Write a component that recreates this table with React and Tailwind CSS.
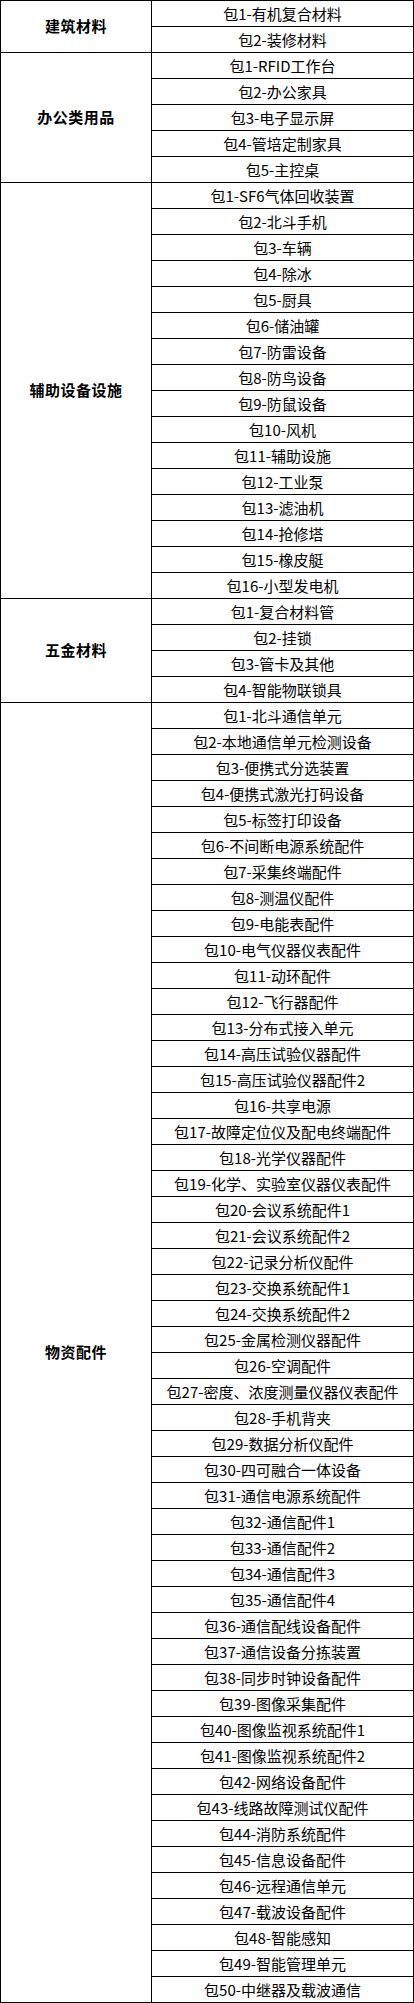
const groups = [
  { name: "建筑材料", items: ["包1-有机复合材料", "包2-装修材料"] },
  {
    name: "办公类用品",
    items: ["包1-RFID工作台", "包2-办公家具", "包3-电子显示屏", "包4-管培定制家具", "包5-主控桌"],
  },
  {
    name: "辅助设备设施",
    items: [
      "包1-SF6气体回收装置", "包2-北斗手机", "包3-车辆", "包4-除冰", "包5-厨具", "包6-储油罐",
      "包7-防雷设备", "包8-防鸟设备", "包9-防鼠设备", "包10-风机", "包11-辅助设施", "包12-工业泵",
      "包13-滤油机", "包14-抢修塔", "包15-橡皮艇", "包16-小型发电机",
    ],
  },
  { name: "五金材料", items: ["包1-复合材料管", "包2-挂锁", "包3-管卡及其他", "包4-智能物联锁具"] },
  {
    name: "物资配件",
    items: [
      "包1-北斗通信单元", "包2-本地通信单元检测设备", "包3-便携式分选装置", "包4-便携式激光打码设备",
      "包5-标签打印设备", "包6-不间断电源系统配件", "包7-采集终端配件", "包8-测温仪配件",
      "包9-电能表配件", "包10-电气仪器仪表配件", "包11-动环配件", "包12-飞行器配件",
      "包13-分布式接入单元", "包14-高压试验仪器配件", "包15-高压试验仪器配件2", "包16-共享电源",
      "包17-故障定位仪及配电终端配件", "包18-光学仪器配件", "包19-化学、实验室仪器仪表配件",
      "包20-会议系统配件1", "包21-会议系统配件2", "包22-记录分析仪配件", "包23-交换系统配件1",
      "包24-交换系统配件2", "包25-金属检测仪器配件", "包26-空调配件", "包27-密度、浓度测量仪器仪表配件",
      "包28-手机背夹", "包29-数据分析仪配件", "包30-四可融合一体设备", "包31-通信电源系统配件",
      "包32-通信配件1", "包33-通信配件2", "包34-通信配件3", "包35-通信配件4", "包36-通信配线设备配件",
      "包37-通信设备分拣装置", "包38-同步时钟设备配件", "包39-图像采集配件", "包40-图像监视系统配件1",
      "包41-图像监视系统配件2", "包42-网络设备配件", "包43-线路故障测试仪配件", "包44-消防系统配件",
      "包45-信息设备配件", "包46-远程通信单元", "包47-载波设备配件", "包48-智能感知",
      "包49-智能管理单元", "包50-中继器及载波通信",
    ],
  },
];

export default function App() {
  return (
    <div className="w-[414px] bg-white text-black font-['Noto_Sans_CJK_SC',sans-serif]">
      <div className="border-t border-l border-r border-black">
        {groups.map((g) => (
          <div key={g.name} className="flex">
            <div className="w-[151px] shrink-0 border-r border-b border-black flex items-center justify-center text-[15px] font-bold tracking-[0.5px]">
              {g.name}
            </div>
            <div className="flex-1">
              {g.items.map((item) => (
                <div
                  key={item}
                  className="h-[26px] border-b border-black flex items-center justify-center text-[15px] leading-none whitespace-nowrap"
                >
                  {item}
                </div>
              ))}
            </div>
          </div>
        ))}
      </div>
    </div>
  );
}
